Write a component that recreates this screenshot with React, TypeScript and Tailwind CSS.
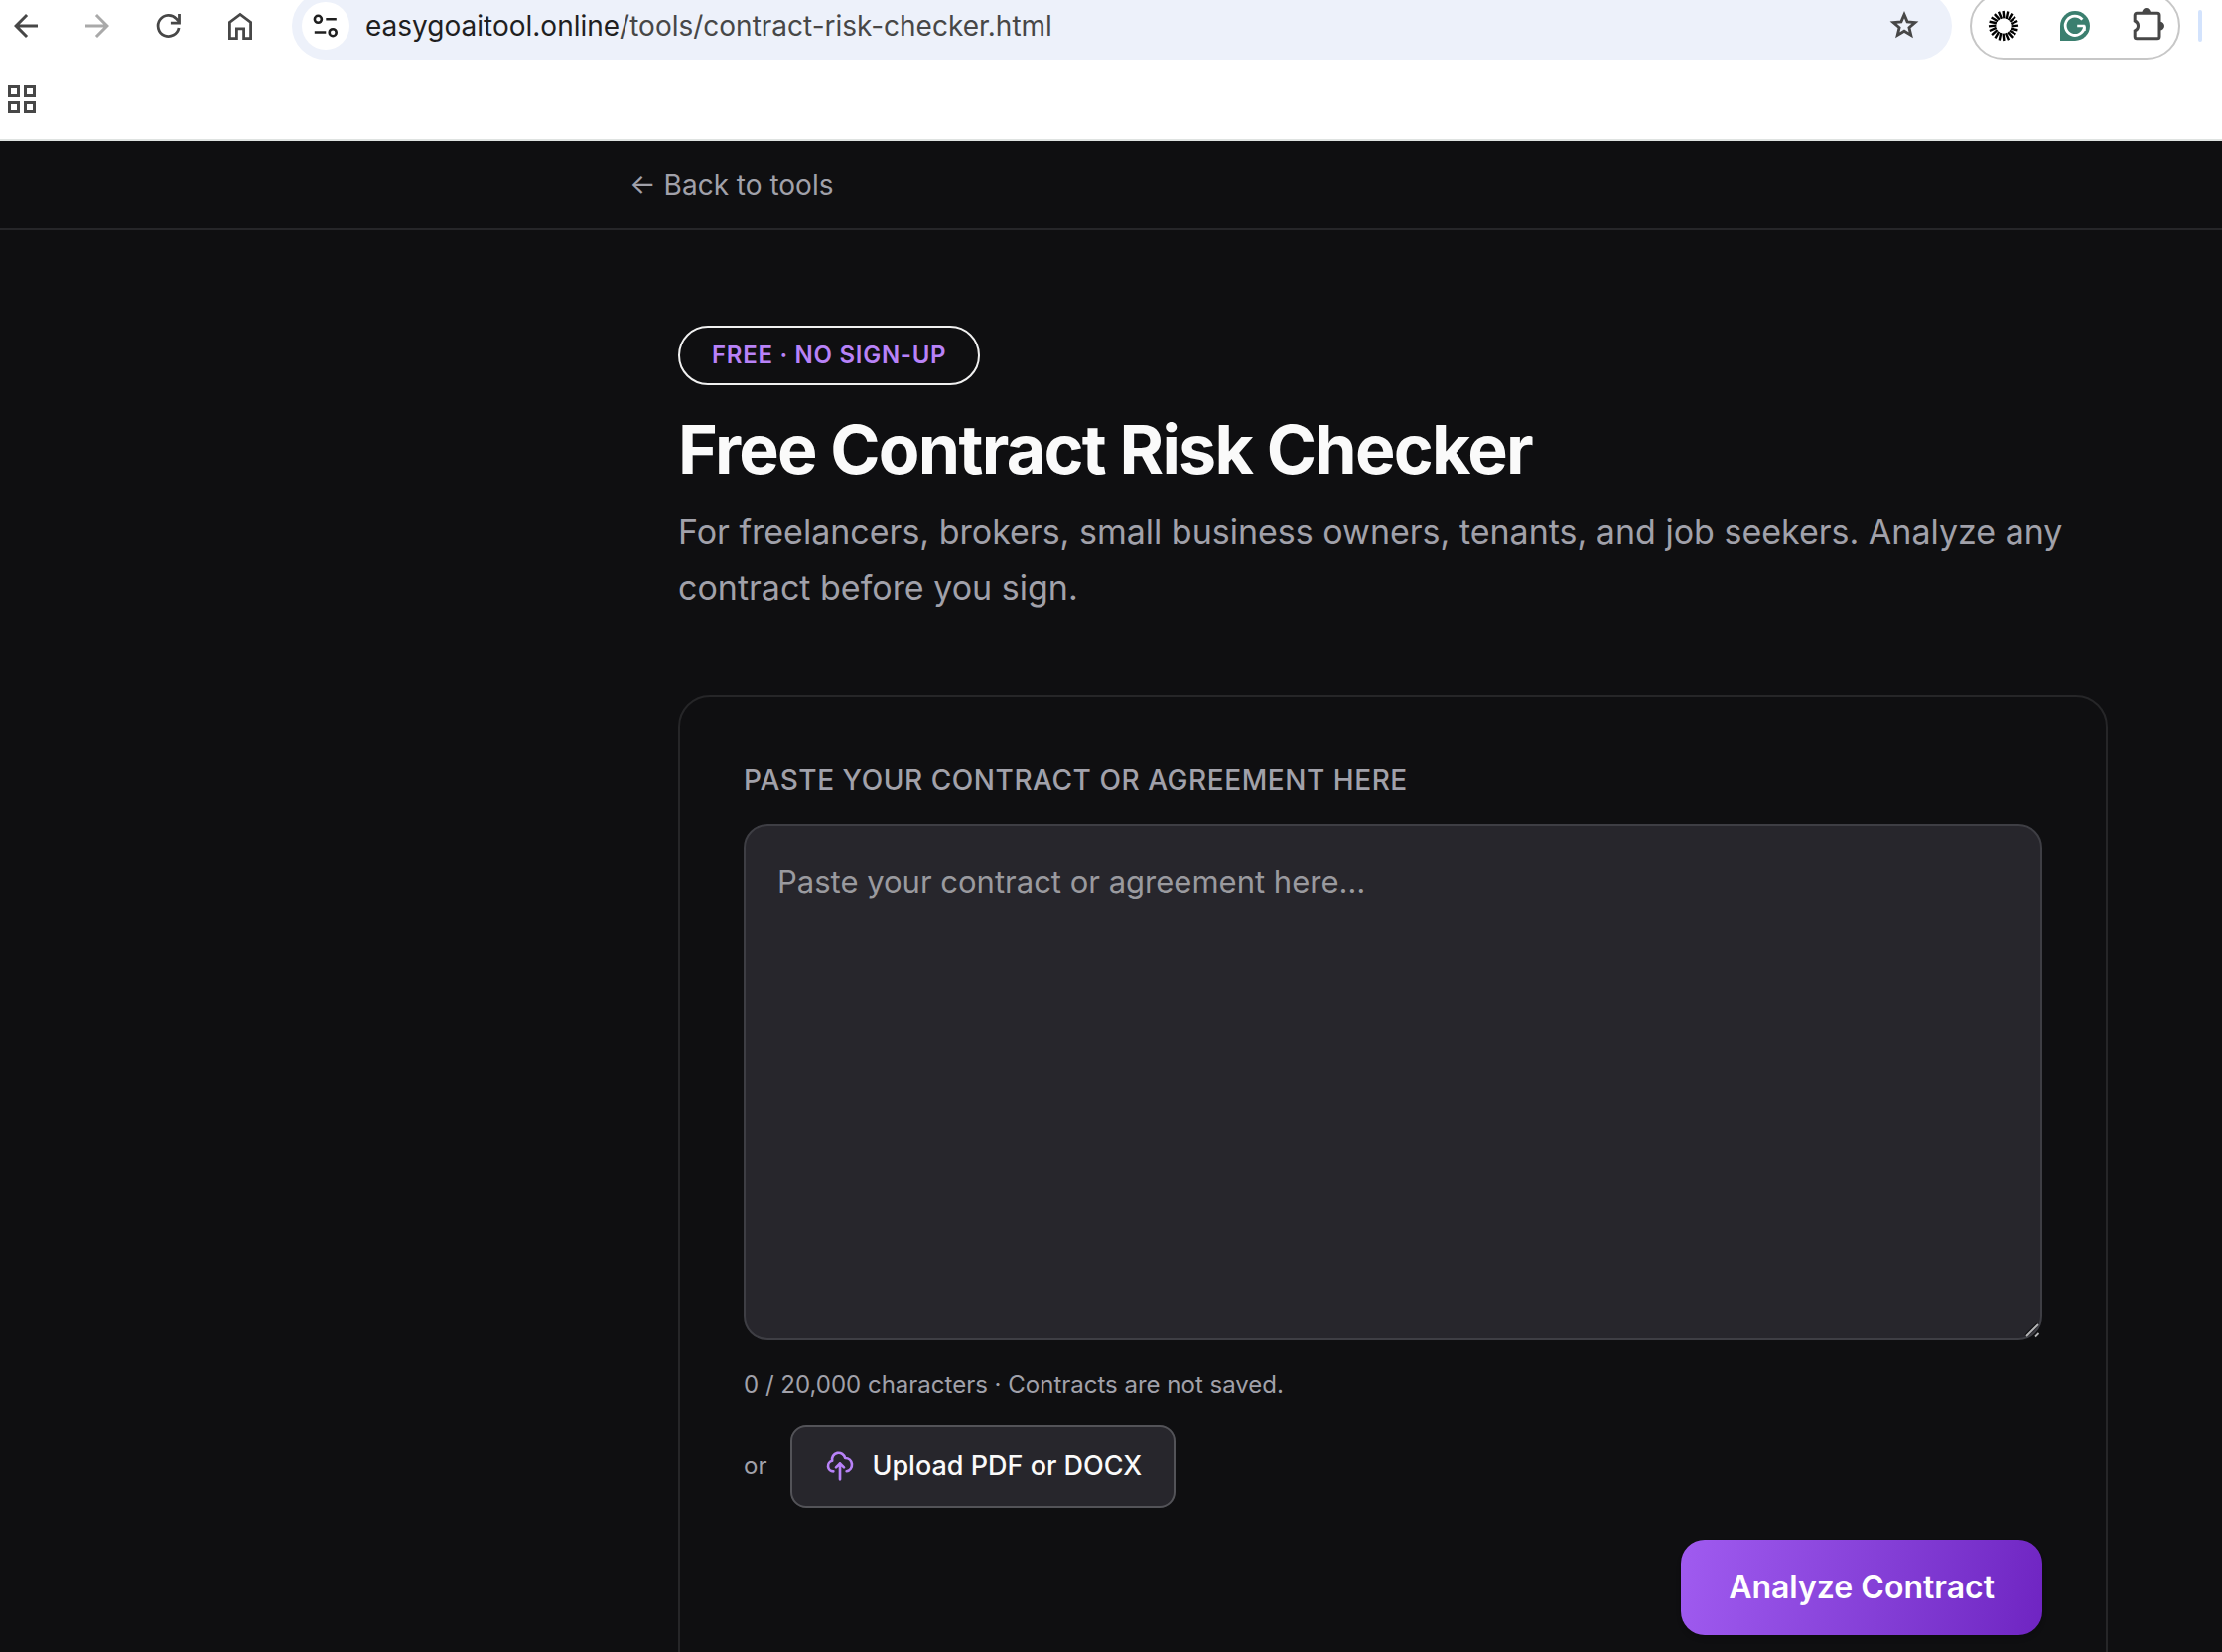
// src/App.tsx

import React, { useState } from "react";
import { MdArrowBack, MdArrowForward } from "react-icons/md";

const MAX_CHARS = 20000;

const RefreshIcon = () => (
  <svg viewBox="0 0 32 32" className="size-8" fill="none" stroke="currentColor" strokeWidth="2.8">
    <path d="M26.1 18A10.6 10.6 0 1 1 23.6 8.9L26.4 12" />
    <path d="M26.5 4v9.2h-8.6" />
  </svg>
);

const HomeIcon = () => (
  <svg viewBox="0 0 32 32" className="size-8" fill="none" stroke="currentColor" strokeWidth="2.8">
    <path d="M5.4 28.6V12.4L16 4.4l10.6 8v16.2h-7v-9.8h-7.2v9.8z" />
  </svg>
);

const SiteInfoIcon = () => (
  <svg viewBox="0 0 48 48" className="size-12" fill="none" stroke="currentColor" strokeWidth="2.6">
    <circle cx="16.4" cy="17.3" r="3.5" />
    <path d="M24.3 17.3h10.5M12.8 30.5h11.5" />
    <circle cx="31.2" cy="30.7" r="3.5" />
  </svg>
);

const StarIcon = () => (
  <svg viewBox="0 0 24 24" className="size-9" fill="none" stroke="currentColor" strokeWidth="1.9">
    <path d="M12 4.4l2.05 4.85 5.25.45-4 3.45 1.2 5.1L12 15.5l-4.5 2.75 1.2-5.1-4-3.45 5.25-.45z" />
  </svg>
);

const SunburstIcon = () => (
  <svg viewBox="-16 -16 32 32" className="size-8" stroke="#000" strokeWidth="2.4">
    {Array.from({ length: 20 }, (_, i) => (
      <path key={i} d="M0.4 -7.6L-0.4 -15" transform={`rotate(${i * 18})`} />
    ))}
  </svg>
);

const GrammarIcon = () => (
  <svg viewBox="-16 -16 32 32" className="size-8" fill="none">
    <path d="M-15 15V0A15 15 0 1 1 0 15z" fill="#3b7f6f" />
    <path d="M7.4 -6.4A9.7 9.7 0 1 0 9.5 1" stroke="#fff" strokeWidth="2.8" />
    <path d="M2.2 0h7.6M9.4 -0.6v5.6" stroke="#fff" strokeWidth="2.6" />
  </svg>
);

const PuzzleIcon = () => (
  <svg viewBox="-1 3 32 32" className="size-8 overflow-visible" fill="none">
    <path
      d="M3.2 14V8.2a2 2 0 0 1 2-2H26a2 2 0 0 1 2 2v21.6a2 2 0 0 1-2 2H5.2a2 2 0 0 1-2-2V24a5.4 5.4 0 0 0 0-10z"
      stroke="#474747"
      strokeWidth="3"
    />
    <path d="M10.4 6a4.3 4.9 0 0 1 8.6 0zM28.4 14.8a4.6 4.3 0 0 1 0 8.6z" fill="#474747" />
  </svg>
);

const AppsIcon = () => (
  <svg viewBox="0 0 28 28" className="size-7" fill="none" stroke="#474747" strokeWidth="3">
    <path d="M1.5 1.5h9v9h-9zM17.5 1.5h9v9h-9zM1.5 17.5h9v9h-9zM17.5 17.5h9v9h-9z" />
  </svg>
);

const UploadIcon = () => (
  <svg
    viewBox="0 0 24 24"
    className="size-8 text-[#b882f8]"
    fill="none"
    stroke="currentColor"
    strokeWidth="2"
    strokeLinecap="round"
    strokeLinejoin="round"
  >
    <path d="M7 16a4 4 0 0 1-.88-7.903A5 5 0 1 1 15.9 6L16 6a5 5 0 0 1 1 9.9M15 13l-3-3m0 0l-3 3m3-3v12" />
  </svg>
);

const BrowserBar: React.FC = () => (
  <header className="border-b-2 border-[#dfe3e1] bg-white text-[#474747]">
    <div className="-mt-2 flex h-[68px] items-center pr-5 pl-[10px]">
      <div className="flex items-center gap-10">
        <button type="button" aria-label="Back" className="flex size-8 items-center justify-center">
          <MdArrowBack className="size-9 shrink-0" />
        </button>
        <button type="button" aria-label="Forward" className="flex size-8 items-center justify-center text-[#a9a9a9]">
          <MdArrowForward className="size-9 shrink-0" />
        </button>
        <button type="button" aria-label="Reload">
          <RefreshIcon />
        </button>
        <button type="button" aria-label="Home">
          <HomeIcon />
        </button>
      </div>
      <div className="ml-9 flex h-full min-w-0 flex-1 items-center rounded-full bg-[#edf1fa] pr-[30px] pl-[10px]">
        <button type="button" aria-label="Site information" className="rounded-full bg-white text-[#1f1f1f]">
          <SiteInfoIcon />
        </button>
        <div className="ml-4 flex-1 truncate text-[28px] leading-9">
          <span className="text-[#1f1f1f]">easygoaitool.online</span>
          <span>/tools/contract-risk-checker.html</span>
        </div>
        <button type="button" aria-label="Bookmark this page">
          <StarIcon />
        </button>
      </div>
      <div className="ml-[18px] flex h-full items-center gap-10 rounded-full border-2 border-[#c7c7c7] px-4">
        <button type="button" aria-label="Assistant extension">
          <SunburstIcon />
        </button>
        <button type="button" aria-label="Grammar extension">
          <GrammarIcon />
        </button>
        <button type="button" aria-label="Extensions">
          <PuzzleIcon />
        </button>
      </div>
      <div className="ml-[18px] h-8 w-1 rounded-full bg-[#d3e3fd]" />
    </div>
    <div className="flex h-20 items-center pl-2">
      <button type="button" aria-label="Apps">
        <AppsIcon />
      </button>
    </div>
  </header>
);

const ContractForm: React.FC = () => {
  const [contract, setContract] = useState("");

  return (
    <form
      className="mt-20 rounded-[32px] border-2 border-[#262628] p-16"
      onSubmit={(e) => e.preventDefault()}
    >
      <label
        htmlFor="contract"
        className="block text-[28px] leading-10 font-medium tracking-[0.02em] text-[#a1a1aa] uppercase"
      >
        Paste your contract or agreement here
      </label>
      <div className="relative mt-6">
        <textarea
          id="contract"
          value={contract}
          maxLength={MAX_CHARS}
          onChange={(e) => setContract(e.target.value)}
          placeholder="Paste your contract or agreement here…"
          className="block h-[520px] w-full resize-none rounded-3xl border-2 border-[#3e3e44] bg-[#27262c] p-8 text-[31px] leading-[48px] text-[#fafafa] placeholder:text-[#9a9a9f]"
        />
        <svg viewBox="0 0 16 16" className="pointer-events-none absolute right-[2px] bottom-[2px] size-4" fill="none">
          <path d="M1 13L13 1M10 13.5L14 9.5" stroke="#101012" strokeWidth="1.5" />
          <path d="M2 14L14 2M11 14.5L14.5 11" stroke="#b4b4b6" strokeWidth="1.8" />
        </svg>
      </div>
      <p className="mt-[29px] text-2xl leading-8 text-[#a1a1aa]">
        {contract.length} / {MAX_CHARS.toLocaleString("en-US")} characters · Contracts are not saved.
      </p>
      <div className="mt-6 flex items-center gap-6">
        <span className="text-2xl leading-8 text-[#a1a1aa]">or</span>
        <button
          type="button"
          className="flex h-[84px] items-center gap-4 rounded-2xl border-2 border-[#535358] bg-[#27262c] px-8 text-[27px] font-medium text-[#fafafa]"
        >
          <UploadIcon />
          Upload PDF or DOCX
        </button>
      </div>
      <div className="mt-8 flex justify-end">
        <button
          type="submit"
          className="h-24 rounded-3xl bg-linear-100 from-[#a05bf0] to-[#6f24c2] px-12 text-[32px] font-semibold text-white shadow-md"
        >
          Analyze Contract
        </button>
      </div>
    </form>
  );
};

const App: React.FC = () => {
  return (
    <div className="h-screen overflow-hidden bg-[#0f0f11] font-[Inter,sans-serif]">
      <BrowserBar />
      <nav className="flex h-[90px] items-center border-b-2 border-[#262629] pl-[634px]">
        <a href="#tools" className="text-[28px] leading-10 text-[#a1a1aa]">
          ← Back to tools
        </a>
      </nav>
      <main className="pt-24 pr-[115px] pl-[683px]">
        <span className="flex h-[60px] w-fit items-center rounded-full border-2 border-[#f0f0f0] px-8 text-2xl font-semibold tracking-[0.03em] text-[#b882f8] uppercase">
          Free · No sign-up
        </span>
        <h1 className="mt-6 text-[68px] leading-[80px] font-bold tracking-tight text-[#fafafa]">
          Free Contract Risk Checker
        </h1>
        <p className="mt-4 text-[34px] leading-[56px] text-[#a1a1aa]">
          For freelancers, brokers, small business owners, tenants, and job seekers. Analyze any contract before you
          sign.
        </p>
        <ContractForm />
      </main>
    </div>
  );
};

export default App;
